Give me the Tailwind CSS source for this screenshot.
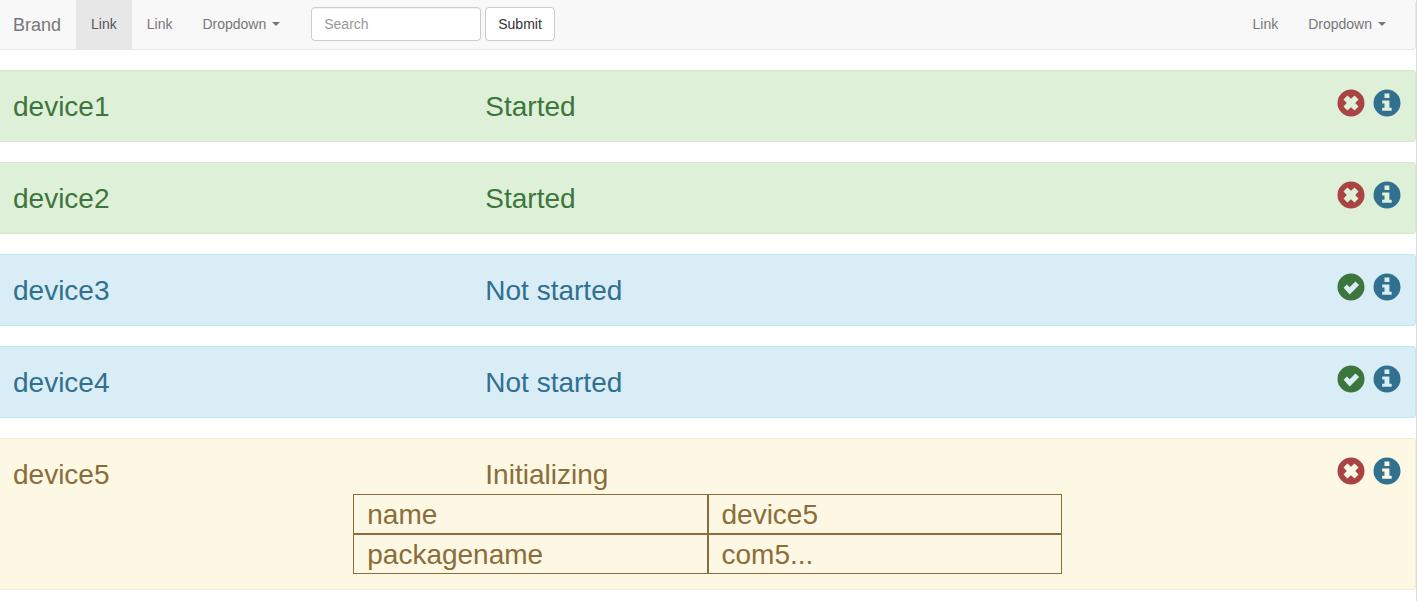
<!DOCTYPE html>
<html lang="en">
<head>
<meta charset="utf-8">
<meta name="viewport" content="width=device-width, initial-scale=1">
<title>Devices</title>
<script src="https://cdn.jsdelivr.net/npm/@tailwindcss/browser@4"></script>
</head>
<body class="min-h-screen overflow-x-hidden border-r border-[#dddddd] bg-white font-['Liberation_Sans',Arial,sans-serif] text-sm text-[#333333]">

<svg class="hidden" aria-hidden="true">
  <symbol id="remove" viewBox="0 0 28 28">
    <path fill-rule="evenodd" d="M14 .5a13.5 13.5 0 1 0 0 27a13.5 13.5 0 1 0 0-27zM10.4 6.5L14 9.8l3.6-3.3l3.9 3.9L18.2 14l3.3 3.6l-3.9 3.9L14 18.2l-3.6 3.3l-3.9-3.9L9.8 14l-3.3-3.6z"/>
  </symbol>
  <symbol id="ok" viewBox="0 0 28 28">
    <path fill-rule="evenodd" d="M14 .5a13.5 13.5 0 1 0 0 27a13.5 13.5 0 1 0 0-27zM6.6 14.7l3.3-3.3l2.8 2.8l5.7-5.8l3.7 3.7l-9.4 9.4z"/>
  </symbol>
  <symbol id="info" viewBox="0 0 28 28">
    <path fill-rule="evenodd" d="M14 .5a13.5 13.5 0 1 0 0 27a13.5 13.5 0 1 0 0-27zM11.5 4.6h4.9v4.4h-4.9zM9.2 11.6h7.2v7.2h2.3v2.9H9.2v-2.9h2.3v-4.4H9.2z"/>
  </symbol>
</svg>

<nav class="mb-5 flex h-[50px] rounded-r border-r border-b border-[#e7e7e7] bg-[#f8f8f8] leading-5 text-[#777777]">
  <a href="#" class="pt-[15px] pr-[15px] pl-[13px] text-lg leading-5">Brand</a>
  <a href="#" aria-current="page" class="bg-[#e7e7e7] px-[15px] py-3.5 text-[#555555]">Link</a>
  <a href="#" class="px-[15px] py-3.5">Link</a>
  <button type="button" class="flex items-center gap-1.5 px-[15px] pb-px">Dropdown
    <span class="border-x-4 border-t-4 border-x-transparent border-t-[#777777]"></span>
  </button>
  <form class="flex items-start gap-1 px-4 py-[7px]">
    <input type="search" aria-label="Search" placeholder="Search" class="h-[34px] w-[170px] rounded border border-[#cccccc] bg-white px-3 text-[#555555] inset-shadow-2xs placeholder:text-[#999999]">
    <button type="button" class="h-[34px] rounded border border-[#cccccc] bg-white px-3 text-[#333333]">Submit</button>
  </form>
  <div class="ml-auto flex pr-3.5">
    <a href="#" class="px-[15px] py-3.5">Link</a>
    <button type="button" class="flex items-center gap-1.5 px-[15px] pb-px">Dropdown
      <span class="border-x-4 border-t-4 border-x-transparent border-t-[#777777]"></span>
    </button>
  </div>
</nav>

<main class="flex flex-col gap-5 text-[28px]">
  <section class="rounded-r border-y border-r border-[#d6e9c6] bg-[#dff0d8] py-[15px] text-[#3c763d]">
    <div class="-ml-0.5 grid h-10 grid-cols-3 leading-[42px]">
      <h2 class="px-[15px]">device1</h2>
      <p class="px-[15px]">Started</p>
      <div class="flex items-start justify-end gap-2 pt-[3px] pr-3.5">
        <button type="button" aria-label="Stop device1" class="text-[#a94442]"><svg class="size-7 fill-current"><use href="#remove"/></svg></button>
        <button type="button" aria-label="Details of device1" class="text-[#31708f]"><svg class="size-7 fill-current"><use href="#info"/></svg></button>
      </div>
    </div>
  </section>

  <section class="rounded-r border-y border-r border-[#d6e9c6] bg-[#dff0d8] py-[15px] text-[#3c763d]">
    <div class="-ml-0.5 grid h-10 grid-cols-3 leading-[42px]">
      <h2 class="px-[15px]">device2</h2>
      <p class="px-[15px]">Started</p>
      <div class="flex items-start justify-end gap-2 pt-[3px] pr-3.5">
        <button type="button" aria-label="Stop device2" class="text-[#a94442]"><svg class="size-7 fill-current"><use href="#remove"/></svg></button>
        <button type="button" aria-label="Details of device2" class="text-[#31708f]"><svg class="size-7 fill-current"><use href="#info"/></svg></button>
      </div>
    </div>
  </section>

  <section class="rounded-r border-y border-r border-[#bce8f1] bg-[#d9edf7] py-[15px] text-[#31708f]">
    <div class="-ml-0.5 grid h-10 grid-cols-3 leading-[42px]">
      <h2 class="px-[15px]">device3</h2>
      <p class="px-[15px]">Not started</p>
      <div class="flex items-start justify-end gap-2 pt-[3px] pr-3.5">
        <button type="button" aria-label="Start device3" class="text-[#3c763d]"><svg class="size-7 fill-current"><use href="#ok"/></svg></button>
        <button type="button" aria-label="Details of device3" class="text-[#31708f]"><svg class="size-7 fill-current"><use href="#info"/></svg></button>
      </div>
    </div>
  </section>

  <section class="rounded-r border-y border-r border-[#bce8f1] bg-[#d9edf7] py-[15px] text-[#31708f]">
    <div class="-ml-0.5 grid h-10 grid-cols-3 leading-[42px]">
      <h2 class="px-[15px]">device4</h2>
      <p class="px-[15px]">Not started</p>
      <div class="flex items-start justify-end gap-2 pt-[3px] pr-3.5">
        <button type="button" aria-label="Start device4" class="text-[#3c763d]"><svg class="size-7 fill-current"><use href="#ok"/></svg></button>
        <button type="button" aria-label="Details of device4" class="text-[#31708f]"><svg class="size-7 fill-current"><use href="#info"/></svg></button>
      </div>
    </div>
  </section>

  <section class="rounded-r border-y border-r border-[#faebcc] bg-[#fcf8e3] py-[15px] text-[#8a6d3b]">
    <div class="-ml-0.5 grid h-10 grid-cols-3 leading-[42px]">
      <h2 class="px-[15px]">device5</h2>
      <p class="px-[15px]">Initializing</p>
      <div class="flex items-start justify-end gap-2 pt-[3px] pr-3.5">
        <button type="button" aria-label="Stop device5" class="text-[#a94442]"><svg class="size-7 fill-current"><use href="#remove"/></svg></button>
        <button type="button" aria-label="Details of device5" class="text-[#31708f]"><svg class="size-7 fill-current"><use href="#info"/></svg></button>
      </div>
    </div>
    <div class="-mx-px">
      <table class="mx-auto w-1/2 table-fixed border-separate border-spacing-0 text-left leading-9">
        <tbody>
          <tr>
            <th scope="row" class="border border-[#8a6d3b] px-[13px] pt-0.5 pb-0 font-normal">name</th>
            <td class="border border-[#8a6d3b] px-[13px] pt-0.5 pb-0">device5</td>
          </tr>
          <tr>
            <th scope="row" class="border border-[#8a6d3b] px-[13px] pt-0.5 pb-0 font-normal">packagename</th>
            <td class="border border-[#8a6d3b] px-[13px] pt-0.5 pb-0">com5...</td>
          </tr>
        </tbody>
      </table>
    </div>
  </section>
</main>
</body>
</html>
